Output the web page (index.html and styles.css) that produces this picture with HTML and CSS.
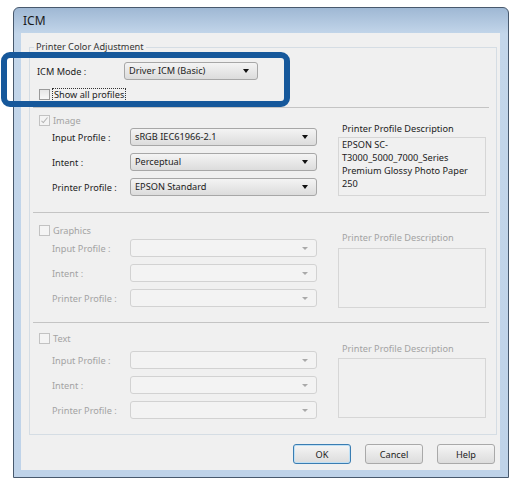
FILE: index.html
```html
<!DOCTYPE html>
<html lang="en">
<head>
  <meta charset="UTF-8" />
  <title>ICM</title>
  <link rel="stylesheet" href="styles.css">
</head>
<body>
  <div class="window" role="dialog" aria-label="ICM">
    <div class="titlebar">ICM</div>

    <div class="client">
      <div class="group">
        <div class="group-title">Printer Color Adjustment</div>

        <div class="mode-row">
          <span class="mode-label">ICM Mode :</span>
          <div class="combo mode-combo">Driver ICM (Basic)<span class="arrow"></span></div>
        </div>

        <div class="check-row show-all">
          <span class="box"></span>
          <span class="focus">Show all profiles</span>
        </div>

        <!-- Image -->
        <div class="sep sep-image"></div>
        <div class="sect sect-image">
          <div class="check-row disabled">
            <span class="box checked"></span>
            <span>Image</span>
          </div>
          <div class="sect-body">
            <div class="fields">
              <span class="field-label">Input Profile :</span>
              <div class="combo">sRGB IEC61966-2.1<span class="arrow"></span></div>
              <span class="field-label">Intent :</span>
              <div class="combo">Perceptual<span class="arrow"></span></div>
              <span class="field-label">Printer Profile :</span>
              <div class="combo">EPSON Standard<span class="arrow"></span></div>
            </div>
            <div class="desc">
              <div class="desc-title">Printer Profile Description</div>
              <div class="desc-box">EPSON SC-<br>T3000_5000_7000_Series<br>Premium Glossy Photo Paper<br>250</div>
            </div>
          </div>
        </div>

        <!-- Graphics -->
        <div class="sep sep-graphics"></div>
        <div class="sect sect-graphics disabled">
          <div class="check-row">
            <span class="box"></span>
            <span>Graphics</span>
          </div>
          <div class="sect-body">
            <div class="fields">
              <span class="field-label">Input Profile :</span>
              <div class="combo off"><span class="arrow"></span></div>
              <span class="field-label">Intent :</span>
              <div class="combo off"><span class="arrow"></span></div>
              <span class="field-label">Printer Profile :</span>
              <div class="combo off"><span class="arrow"></span></div>
            </div>
            <div class="desc">
              <div class="desc-title">Printer Profile Description</div>
              <div class="desc-box"></div>
            </div>
          </div>
        </div>

        <!-- Text -->
        <div class="sep sep-text"></div>
        <div class="sect sect-text disabled">
          <div class="check-row">
            <span class="box"></span>
            <span>Text</span>
          </div>
          <div class="sect-body">
            <div class="fields">
              <span class="field-label">Input Profile :</span>
              <div class="combo off"><span class="arrow"></span></div>
              <span class="field-label">Intent :</span>
              <div class="combo off"><span class="arrow"></span></div>
              <span class="field-label">Printer Profile :</span>
              <div class="combo off"><span class="arrow"></span></div>
            </div>
            <div class="desc">
              <div class="desc-title">Printer Profile Description</div>
              <div class="desc-box"></div>
            </div>
          </div>
        </div>
      </div>

      <div class="buttons">
        <button class="btn default">OK</button>
        <button class="btn">Cancel</button>
        <button class="btn">Help</button>
      </div>
    </div>
  </div>

  <!-- callout drawn over the dialog -->
  <div class="highlight"></div>
</body>
</html>
```

FILE: styles.css
```css
/* Reset */
*, *::before, *::after {
  box-sizing: border-box;
}

body {
  margin: 0;
  background: #fff;
  font-family: 'Noto Sans', 'DejaVu Sans', sans-serif;
  font-size: 9.2px;
  color: #222;
  position: relative;
  width: 510px;
  height: 482px;
  overflow: hidden;
}

.window {
  margin: 7px 0 0 13px;
  width: 496px;
  height: 471px;
  border: 1px solid #48596d;
  border-radius: 6px 6px 0 0;
  background: linear-gradient(to bottom, #9fb8d4 0, #c3d6ea 26px, #bfd3e9 100%);
  padding: 0 8px 7px 7px;
  display: flex;
  flex-direction: column;
}

.titlebar {
  height: 25px;
  line-height: 25px;
  padding-left: 2px;
  font-size: 12px;
  color: #1a1a1a;
}

.client {
  flex: 1;
  background: #f0f0f0;
  display: flex;
  flex-direction: column;
}

/* Group box */
.group {
  margin: 14px 3px 0 8px;
  height: 388px;
  border: 1px solid #d5dde4;
}

.group-title {
  height: 12px;
  line-height: 12px;
  margin-top: -7px;
  margin-left: 4px;
  padding: 0 2px;
  background: #f0f0f0;
  display: table;
  color: #333;
}

.mode-row {
  display: flex;
  align-items: center;
  margin: 9px 0 0 7px;
  height: 18px;
}

.mode-label {
  width: 87px;
}

.mode-combo {
  width: 134px;
}

/* Checkbox rows */
.check-row {
  display: flex;
  align-items: center;
  gap: 3px;
  margin-left: 9px;
  height: 11px;
}

.show-all {
  margin-top: 8px;
  height: 13px;
}

.box {
  width: 11px;
  height: 11px;
  border: 1px solid #9a9a9a;
  background: linear-gradient(to bottom, #e6e6e6, #f8f8f8);
  position: relative;
  flex: none;
}

.box.checked::after {
  content: "";
  position: absolute;
  left: 3px;
  top: 0;
  width: 3px;
  height: 7px;
  border: solid #b5b5b5;
  border-width: 0 1.5px 1.5px 0;
  transform: rotate(40deg);
}

.focus {
  outline: 1px dotted #333;
  padding: 0 1px;
  line-height: 12px;
}

.disabled,
.disabled .field-label,
.disabled .desc-title {
  color: #a3a3a3;
}

.disabled .box {
  border-color: #c2c2c2;
  background: #f4f4f4;
}

/* Separators */
.sep {
  height: 1px;
  background: #c4c4c4;
  margin: 0 7px 0 3px;
}

.sep-image { margin-top: 6px; }
.sep-graphics { margin-top: 16px; }
.sep-text { margin-top: 14px; }

.sect-image .check-row { margin-top: 7px; }
.sect-graphics .check-row { margin-top: 12px; }
.sect-text .check-row { margin-top: 10px; }

.sect-body {
  display: flex;
  align-items: flex-start;
  margin-left: 22px;
  gap: 21px;
}

.sect-image .sect-body { margin-top: 2px; }
.sect-graphics .sect-body { margin-top: 3px; }
.sect-text .sect-body { margin-top: 7px; }

.fields {
  display: grid;
  grid-template-columns: 78px 187px;
  grid-auto-rows: 18px;
  row-gap: 7px;
  align-items: center;
}

.field-label {
  white-space: nowrap;
}

/* Combo boxes */
.combo {
  position: relative;
  height: 18px;
  line-height: 16px;
  padding-left: 4px;
  border: 1px solid #a7a7a7;
  border-radius: 3px;
  background: linear-gradient(to bottom, #f4f4f4, #dcdcdc);
  color: #222;
  white-space: nowrap;
}

.combo .arrow {
  position: absolute;
  right: 8px;
  top: 6px;
  border-left: 3.5px solid transparent;
  border-right: 3.5px solid transparent;
  border-top: 4px solid #111;
}

.combo.off {
  border-color: #d2d2d2;
  background: #f3f3f3;
}

.combo.off .arrow {
  border-top-color: #a9a9a9;
  border-left-width: 3px;
  border-right-width: 3px;
  border-top-width: 3px;
  top: 7px;
}

/* Description */
.desc {
  width: 148px;
}

.desc-title {
  height: 12px;
  line-height: 12px;
  padding-left: 4px;
}

.desc-box {
  border: 1px solid #d6d6d6;
  padding: 0 3px;
  line-height: 13px;
  color: #222;
}

.sect-image .desc { margin-top: -5px; }
.sect-image .desc-box { margin-top: 2px; height: 59px; }

.sect-graphics .desc { margin-top: -7px; }
.sect-graphics .desc-box { margin-top: 4px; height: 60px; }

.sect-text .desc { margin-top: -8px; }
.sect-text .desc-box { margin-top: 3px; height: 60px; }

/* Buttons */
.buttons {
  display: flex;
  justify-content: flex-end;
  gap: 14px;
  margin-top: 9px;
  padding-right: 5px;
}

.btn {
  width: 58px;
  height: 20px;
  padding: 0;
  font: inherit;
  color: #222;
  border: 1px solid #a9a9a9;
  border-radius: 3px;
  background: linear-gradient(to bottom, #f5f5f5, #dcdcdc);
}

.btn.default {
  border-color: #3a7db2;
  box-shadow: inset 0 0 0 1px #bfe0f5;
}

/* Callout */
.highlight {
  position: absolute;
  left: 1px;
  top: 52px;
  width: 289px;
  height: 55px;
  border: 6px solid #16589b;
  border-radius: 9px;
}
```
